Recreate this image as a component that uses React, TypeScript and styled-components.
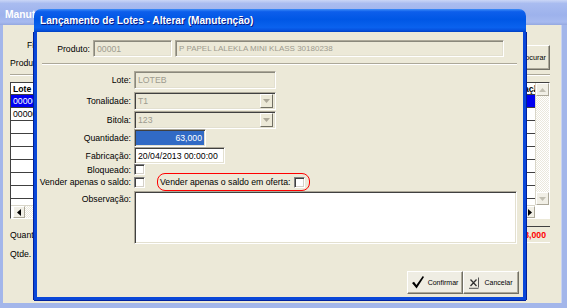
import styled, { createGlobalStyle } from "styled-components";

const FACE = "#ECE9D8";

const GlobalStyle = createGlobalStyle`
  html, body { margin: 0; padding: 0; }
  body {
    width: 567px;
    height: 308px;
    overflow: hidden;
    background: #fff;
    font-family: "Liberation Sans", Arial, sans-serif;
    font-size: 8.7px;
    color: #000;
  }
  * { box-sizing: border-box; }
`;

const Desktop = styled.div`
  position: relative;
  width: 567px;
  height: 308px;
  overflow: hidden;
`;

/* ---------- janela de fundo (inativa) ---------- */

const BgWindow = styled.div`
  display: flex;
  flex-direction: column;
  width: 567px;
  height: 308px;
  background: #a3b6ea;
`;

const BgTitle = styled.div`
  flex: none;
  height: 25px;
  padding: 9px 0 0 5px;
  color: #fff;
  font-weight: bold;
  font-size: 10.3px;
  line-height: 12px;
  white-space: nowrap;
  background: linear-gradient(to bottom, #cad6f6 0%, #a9bcf0 14%, #9db2ec 60%, #a7baef 88%, #94a8e0 100%);
`;

const BgBody = styled.div`
  flex: 1;
  display: flex;
  flex-direction: column;
  margin: 0 5px 5px 3px;
  padding: 10px 11px 0 7px;
  background: ${FACE};
  border-right: 1px solid #c8d3f2;
`;

const FilterArea = styled.div`
  display: flex;
  justify-content: space-between;
  align-items: flex-end;
  height: 35px;
`;

const FilterFields = styled.div`
  display: flex;
  flex-direction: column;
  gap: 4px;
`;

const FilterRow = styled.div<{ $indent: number }>`
  display: flex;
  align-items: center;
  gap: 4px;
  height: 14px;
  padding-left: ${(p) => p.$indent}px;
`;

const BgInput = styled.div`
  width: 90px;
  height: 14px;
  background: #fff;
  border: 1px solid #7f9db9;
`;

const SmallButton = styled.div`
  width: 36px;
  height: 25px;
  display: flex;
  align-items: center;
  justify-content: center;
  font-size: 7.3px;
  white-space: nowrap;
  background: ${FACE};
  border: 1px solid;
  border-color: #fff #716f64 #716f64 #fff;
  box-shadow: inset -1px -1px 0 #aca899;
`;

const Etched = styled.div<{ $mt: number; $mx?: string }>`
  flex: none;
  height: 2px;
  margin-top: ${(p) => p.$mt}px;
  margin-inline: ${(p) => p.$mx ?? "0"};
  border-top: 1px solid #aca899;
  border-bottom: 1px solid #fff;
`;

const BgGrid = styled.div`
  margin-top: 6px;
  height: 137px;
  display: grid;
  grid-template-columns: 1fr 14px;
  grid-template-rows: 1fr 13px;
  background: #fff;
  border: 1px solid;
  border-color: #404040 #fff #fff #404040;
`;

const GridView = styled.div`
  overflow: hidden;
`;

const GridLine = styled.div<{ $selected?: boolean; $header?: boolean }>`
  display: grid;
  grid-template-columns: 80px 90px 80px 90px 141px 100px;
  width: max-content;
  height: ${(p) => (p.$header ? 12 : 13)}px;
  background: ${(p) => (p.$selected ? "#0000f0" : "#fff")};
  color: ${(p) => (p.$selected ? "#fff" : "#000")};
  font-weight: ${(p) => (p.$header ? "bold" : "normal")};
  border-bottom: 1px solid #404040;
`;

const GridCell = styled.div`
  padding: 0 2px;
  line-height: 12px;
  white-space: nowrap;
  overflow: hidden;
  border-right: 1px solid #404040;
`;

const VScroll = styled.div`
  display: flex;
  flex-direction: column;
  border-left: 1px solid #d8d5c8;
`;

const HScroll = styled.div`
  display: flex;
  padding-left: 2px;
  border-top: 1px solid #d8d5c8;
`;

const ScrollBtn = styled.div<{ $size: number; $vertical?: boolean }>`
  flex: none;
  width: ${(p) => (p.$vertical ? "100%" : `${p.$size}px`)};
  height: ${(p) => (p.$vertical ? `${p.$size}px` : "100%")};
  display: flex;
  align-items: center;
  justify-content: center;
  background: #f1efe6;
  border: 1px solid;
  border-color: #fff #aca899 #aca899 #fff;
`;

const Track = styled.div`
  flex: 1;
  background-color: #f7f6f1;
  background-image: repeating-conic-gradient(#fff 0 25%, #ebe8dc 0 50%);
  background-size: 2px 2px;
`;

const Corner = styled.div`
  background: #fff;
`;

const TotalRow = styled.div<{ $mt: number; $h: number }>`
  display: flex;
  justify-content: space-between;
  align-items: center;
  margin-top: ${(p) => p.$mt}px;
  height: ${(p) => p.$h}px;
`;

const RedField = styled.div`
  width: 70px;
  height: 100%;
  display: flex;
  align-items: center;
  justify-content: flex-end;
  padding-right: 4px;
  color: #ff0000;
  font-weight: bold;
  border-top: 1px solid #404040;
  border-bottom: 1px solid #fff;
  background: ${FACE};
`;

/* ---------- diálogo ativo ---------- */

const Dialog = styled.div`
  position: absolute;
  left: 34px;
  top: 9px;
  width: 492px;
  height: 291px;
  display: flex;
  flex-direction: column;
`;

const DialogTitle = styled.div`
  flex: none;
  height: 23px;
  padding: 6px 0 0 6px;
  border-radius: 7px 7px 0 0;
  color: #fff;
  font-weight: bold;
  font-size: 10.1px;
  line-height: 12px;
  white-space: nowrap;
  text-shadow: 1px 1px 0 #0a1883;
  background: linear-gradient(to bottom, #3d8df8 0%, #0d5eeb 12%, #0057e5 45%, #0a62ee 80%, #0652df 92%, #003fc0 100%);
`;

const DialogFrame = styled.div`
  flex: 1;
  display: flex;
  flex-direction: column;
  padding: 8px 0 3px 0;
  background: ${FACE};
  border: 3px solid #0a47d8;
  border-top: 0;
  box-shadow: -1px 0 0 #00219c, 1px 0 0 #00219c, 0 1px 0 #00219c;
`;

const ProdutoRow = styled.div`
  display: flex;
  align-items: center;
  gap: 3px;
  height: 17px;
`;

const Label = styled.span<{ $w?: number }>`
  width: ${(p) => (p.$w ? `${p.$w}px` : "auto")};
  text-align: right;
  white-space: nowrap;
`;

const FormRow = styled.div<{ $h: number; $mt?: number; $top?: boolean }>`
  display: grid;
  grid-template-columns: 94px auto;
  column-gap: 3px;
  align-items: ${(p) => (p.$top ? "start" : "center")};
  justify-items: start;
  height: ${(p) => p.$h}px;
  margin-top: ${(p) => p.$mt ?? 0}px;

  & > ${Label} {
    justify-self: end;
    padding-top: ${(p) => (p.$top ? 3 : 0)}px;
  }
`;

const Field = styled.div<{ $w: number; $h?: number; $disabled?: boolean; $small?: boolean }>`
  width: ${(p) => p.$w}px;
  height: ${(p) => (p.$h ? `${p.$h}px` : "100%")};
  display: flex;
  align-items: center;
  padding: 0 3px;
  font-size: ${(p) => (p.$small ? "8px" : "inherit")};
  background: ${(p) => (p.$disabled ? FACE : "#fff")};
  color: ${(p) => (p.$disabled ? "#9d9b8f" : "#000")};
  border: 1px solid;
  border-color: #aca899 #fff #fff #aca899;
  box-shadow: inset 1px 1px 0 ${(p) => (p.$disabled ? "#8a887c" : "#404040")}, inset -1px -1px 0 #e3e0d0;
  white-space: nowrap;
  overflow: hidden;
`;

const ComboField = styled(Field)`
  padding-right: 2px;
  justify-content: space-between;
  box-shadow: inset 1px 1px 0 #404040, inset -1px -1px 0 #e3e0d0;
`;

const DropBtn = styled.span`
  width: 13px;
  height: 14px;
  display: flex;
  align-items: center;
  justify-content: center;
  background: ${FACE};
  border: 1px solid;
  border-color: #fff #716f64 #716f64 #fff;
`;

const Selection = styled.span`
  flex: 1;
  align-self: stretch;
  margin: 1px -2px 1px -2px;
  display: flex;
  align-items: center;
  justify-content: flex-end;
  padding-right: 2px;
  background: #316ac5;
  color: #fff;
`;

const Check = styled.span`
  display: inline-block;
  width: 11px;
  height: 11px;
  background: #fff;
  border: 1px solid;
  border-color: #808080 #fff #fff #808080;
  box-shadow: inset 1px 1px 0 #404040, inset -1px -1px 0 #d4d0c8;
`;

const CheckPair = styled.div`
  display: flex;
  align-items: center;
`;

const RedMark = styled.span`
  display: inline-flex;
  align-items: center;
  gap: 4px;
  height: 18px;
  margin-left: 12px;
  padding: 0 4px 0 2px;
  border: 1.5px solid #ff0000;
  border-radius: 8px;
`;

const Footer = styled.div`
  margin-top: auto;
  display: flex;
  justify-content: flex-end;
  padding-right: 4px;
`;

const Btn = styled.button`
  width: 56px;
  height: 23px;
  display: flex;
  align-items: center;
  justify-content: center;
  gap: 4px;
  padding: 0;
  font-family: "Liberation Sans", Arial, sans-serif;
  font-size: 7px;
  color: #000;
  background: #efede3;
  border: 1px solid;
  border-color: #fff #716f64 #716f64 #fff;
  box-shadow: inset -1px -1px 0 #aca899;
`;

type Dir = "up" | "down" | "left" | "right";

const Arrow = ({ dir, color }: { dir: Dir; color: string }) => {
  const vertical = dir === "up" || dir === "down";
  const pts = {
    up: "0,4 3.5,0 7,4",
    down: "0,0 7,0 3.5,4",
    left: "4,0 4,7 0,3.5",
    right: "0,0 0,7 4,3.5",
  }[dir];
  const w = vertical ? 7 : 4;
  const h = vertical ? 4 : 7;
  return (
    <svg width={w} height={h} viewBox={`0 0 ${w} ${h}`}>
      <polygon points={pts} fill={color} />
    </svg>
  );
};

const CheckIcon = () => (
  <svg width="12" height="13" viewBox="0 0 12 13">
    <polygon points="0,7 2,5.8 4.4,9 10.8,0 12,1 4.6,12.5" fill="#000" />
  </svg>
);

const CancelIcon = () => (
  <svg width="11" height="12" viewBox="0 0 11 12">
    <path d="M1.5 2.5 L7.5 9 M7.5 2.5 L1.5 9" stroke="#333" strokeWidth="1.3" fill="none" />
    <path d="M9.5 0.5 V10.5 M0 11.3 H9.5" stroke="#555" strokeWidth="1" fill="none" />
  </svg>
);

const columns = ["Lote", "Tonalidade", "Bitola", "Quantidade", "Fabricação", "Observação"];
const rows = [["0000001"], ["0000002"], [], [], [], [], [], [], []];

export default function App() {
  return (
    <Desktop>
      <GlobalStyle />
      <BgWindow>
        <BgTitle>Manutenção</BgTitle>
        <BgBody>
          <FilterArea>
            <FilterFields>
              <FilterRow $indent={17}>
                <span>Filial:</span>
                <BgInput />
              </FilterRow>
              <FilterRow $indent={0}>
                <span>Produto:</span>
                <BgInput />
              </FilterRow>
            </FilterFields>
            <SmallButton>Procurar</SmallButton>
          </FilterArea>
          <Etched $mt={4} />
          <BgGrid>
            <GridView>
              <GridLine $header>
                {columns.map((c, j) => (
                  <GridCell key={c}>{j === 0 || j === columns.length - 1 ? c : ""}</GridCell>
                ))}
              </GridLine>
              {rows.map((r, i) => (
                <GridLine key={i} $selected={i === 0}>
                  {columns.map((c, j) => (
                    <GridCell key={c}>{r[j] ?? ""}</GridCell>
                  ))}
                </GridLine>
              ))}
            </GridView>
            <VScroll>
              <ScrollBtn $vertical $size={13}>
                <Arrow dir="up" color="#c2bfb2" />
              </ScrollBtn>
              <Track />
              <ScrollBtn $vertical $size={13}>
                <Arrow dir="down" color="#c2bfb2" />
              </ScrollBtn>
            </VScroll>
            <HScroll>
              <ScrollBtn $size={12}>
                <Arrow dir="left" color="#000" />
              </ScrollBtn>
              <Track />
              <ScrollBtn $size={11}>
                <Arrow dir="right" color="#000" />
              </ScrollBtn>
            </HScroll>
            <Corner />
          </BgGrid>
          <TotalRow $mt={7} $h={17}>
            <span>Quantidade Total:</span>
            <RedField>63,000</RedField>
          </TotalRow>
          <TotalRow $mt={4} $h={14}>
            <span>Qtde. Lotes:</span>
            <span />
          </TotalRow>
        </BgBody>
      </BgWindow>

      <Dialog>
        <DialogTitle>Lançamento de Lotes - Alterar (Manutenção)</DialogTitle>
        <DialogFrame>
          <ProdutoRow>
            <Label $w={53}>Produto:</Label>
            <Field $w={79} $disabled>00001</Field>
            <Field $w={329} $disabled $small>
              P PAPEL LALEKLA MINI KLASS 30180238
            </Field>
          </ProdutoRow>
          <Etched $mt={6} $mx="5px 6px" />

          <FormRow $h={18} $mt={6}>
            <Label>Lote:</Label>
            <Field $w={142} $disabled>LOTEB</Field>
          </FormRow>
          <FormRow $h={18} $mt={3}>
            <Label>Tonalidade:</Label>
            <ComboField $w={142} $disabled>
              <span>T1</span>
              <DropBtn>
                <Arrow dir="down" color="#aca899" />
              </DropBtn>
            </ComboField>
          </FormRow>
          <FormRow $h={18} $mt={1}>
            <Label>Bitola:</Label>
            <ComboField $w={142} $disabled>
              <span>123</span>
              <DropBtn>
                <Arrow dir="down" color="#aca899" />
              </DropBtn>
            </ComboField>
          </FormRow>
          <FormRow $h={18}>
            <Label>Quantidade:</Label>
            <Field $w={72}>
              <Selection>63,000</Selection>
            </Field>
          </FormRow>
          <FormRow $h={17}>
            <Label>Fabricação:</Label>
            <Field $w={91}>20/04/2013 00:00:00</Field>
          </FormRow>
          <FormRow $h={9}>
            <Label>Bloqueado:</Label>
            <Check />
          </FormRow>
          <FormRow $h={18}>
            <Label>Vender apenas o saldo:</Label>
            <CheckPair>
              <Check />
              <RedMark>
                <span>Vender apenas o saldo em oferta:</span>
                <Check />
              </RedMark>
            </CheckPair>
          </FormRow>
          <FormRow $h={53} $top>
            <Label>Observação:</Label>
            <Field $w={383} />
          </FormRow>

          <Footer>
            <Btn>
              <CheckIcon />
              <span>Confirmar</span>
            </Btn>
            <Btn>
              <CancelIcon />
              <span>Cancelar</span>
            </Btn>
          </Footer>
        </DialogFrame>
      </Dialog>
    </Desktop>
  );
}
